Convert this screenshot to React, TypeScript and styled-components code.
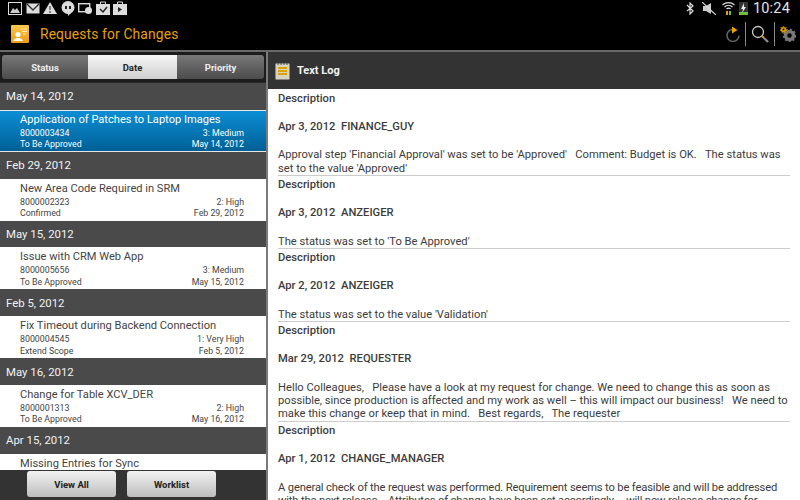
import React from "react";
import styled, { createGlobalStyle } from "styled-components";

const GlobalStyle = createGlobalStyle`
  html, body {
    margin: 0;
    padding: 0;
    background: #000;
  }
  body {
    font-family: "Roboto", "Liberation Sans", sans-serif;
  }
`;

type Request = {
  group: string;
  title: string;
  id: string;
  priority: string;
  status: string;
  date: string;
  selected?: boolean;
};

const requests: Request[] = [
  { group: "May 14, 2012", title: "Application of Patches to Laptop Images", id: "8000003434", priority: "3: Medium", status: "To Be Approved", date: "May 14, 2012", selected: true },
  { group: "Feb 29, 2012", title: "New Area Code Required in SRM", id: "8000002323", priority: "2: High", status: "Confirmed", date: "Feb 29, 2012" },
  { group: "May 15, 2012", title: "Issue with CRM Web App", id: "8000005656", priority: "3: Medium", status: "To Be Approved", date: "May 15, 2012" },
  { group: "Feb 5, 2012", title: "Fix Timeout during Backend Connection", id: "8000004545", priority: "1: Very High", status: "Extend Scope", date: "Feb 5, 2012" },
  { group: "May 16, 2012", title: "Change for Table XCV_DER", id: "8000001313", priority: "2: High", status: "To Be Approved", date: "May 16, 2012" },
  { group: "Apr 15, 2012", title: "Missing Entries for Sync", id: "", priority: "", status: "", date: "" },
];

const logs = [
  { head: "Apr 3, 2012  FINANCE_GUY", body: "Approval step 'Financial Approval' was set to be 'Approved'   Comment: Budget is OK.   The status was set to the value 'Approved'" },
  { head: "Apr 3, 2012  ANZEIGER", body: "The status was set to 'To Be Approved'" },
  { head: "Apr 2, 2012  ANZEIGER", body: "The status was set to the value 'Validation'" },
  { head: "Mar 29, 2012  REQUESTER", body: "Hello Colleagues,   Please have a look at my request for change. We need to change this as soon as possible, since production is affected and my work as well – this will impact our business!   We need to make this change or keep that in mind.   Best regards,   The requester" },
  { head: "Apr 1, 2012  CHANGE_MANAGER", body: "A general check of the request was performed. Requirement seems to be feasible and will be addressed with the next release.   Attributes of change have been set accordingly – will now release change for", tight: true },
];

const Screen = styled.div`
  width: 800px;
  height: 500px;
  overflow: hidden;
  display: flex;
  flex-direction: column;
  background: #000;
`;

const StatusBar = styled.div`
  height: 16px;
  flex: none;
  background: #000;
  display: flex;
  align-items: center;
  justify-content: space-between;
  padding: 0 10px 0 8px;
`;

const StatusIcons = styled.div`
  display: flex;
  align-items: center;
  gap: 3.5px;
`;

const Clock = styled.span`
  color: #e4e4e4;
  font-size: 14.5px;
  line-height: 16px;
  margin: 1px 0 0 1px;
  letter-spacing: 0.2px;
`;

const ActionBar = styled.div`
  height: 36px;
  flex: none;
  box-sizing: border-box;
  display: flex;
  align-items: center;
  padding: 2px 4px 0 11px;
  border-bottom: 2px solid #6a6a6a;
`;

const AppTitle = styled.h1`
  margin: 0 0 0 11px;
  flex: 1;
  color: #e8a200;
  font-size: 13.8px;
  font-weight: 400;
  letter-spacing: 0.15px;
`;

const ActionDivider = styled.div`
  width: 1px;
  height: 24px;
  background: #888;
  margin: 0 5px;
`;

const Body = styled.div`
  flex: 1;
  min-height: 0;
  display: flex;
`;

const LeftPane = styled.div`
  width: 266px;
  flex: none;
  position: relative;
  background: #4a4a4a;
  border-right: 2px solid #7a7a7a;
  overflow: hidden;
`;

const SegmentWrap = styled.div`
  height: 31px;
  padding: 3px 2px 2px;
  box-sizing: border-box;
  background: #1c1c1c;
  border-bottom: 1px solid #2a2a2a;
`;

const Segments = styled.div`
  height: 24px;
  display: grid;
  grid-template-columns: 86px 89px 1fr;
  border-radius: 3px;
  overflow: hidden;
`;

const Segment = styled.div<{ $active?: boolean }>`
  display: flex;
  align-items: center;
  justify-content: center;
  font-size: 9.5px;
  font-weight: 700;
  color: ${(p) => (p.$active ? "#222" : "#eee")};
  background: ${(p) =>
    p.$active
      ? "linear-gradient(#f6f6f6, #cfcfcf)"
      : "linear-gradient(#787878, #4c4c4c)"};
`;

const GroupHeader = styled.div`
  height: 26.8px;
  display: flex;
  align-items: center;
  padding-left: 6px;
  box-sizing: border-box;
  background: #4a4a4a;
  color: #f2f2f2;
  font-size: 11.4px;
`;

const Row = styled.div<{ $selected?: boolean }>`
  height: 42px;
  box-sizing: content-box;
  padding: 0 22px 0 20px;
  display: flex;
  flex-direction: column;
  color: ${(p) => (p.$selected ? "#fff" : "#444")};
  background: ${(p) =>
    p.$selected ? "linear-gradient(#0c8fd6, #005f94)" : "#fff"};
  box-shadow: ${(p) =>
    p.$selected ? "inset 0 1px #e6e6e6, inset 0 -1px #e6e6e6" : "none"};
`;

const RowTitle = styled.div`
  font-size: 11.1px;
  padding-top: 1px;
  line-height: 17px;
  white-space: nowrap;
`;

const RowLine = styled.div`
  display: flex;
  justify-content: space-between;
  font-size: 8.8px;
  line-height: 11.5px;
`;

const BottomBar = styled.div`
  position: absolute;
  left: 0;
  right: 0;
  bottom: 0;
  height: 30px;
  background: #333;
  display: flex;
  justify-content: center;
  gap: 11px;
  padding-right: 23px;
`;

const BarButton = styled.div`
  width: 89px;
  height: 26px;
  margin-top: 1px;
  border-radius: 3px;
  background: linear-gradient(#f2f2f2, #bdbdbd);
  color: #222;
  font-size: 9.5px;
  font-weight: 700;
  display: flex;
  align-items: center;
  justify-content: center;
`;

const RightPane = styled.div`
  flex: 1;
  min-width: 0;
  display: flex;
  flex-direction: column;
  background: #fff;
`;

const PaneHeader = styled.div`
  height: 37px;
  flex: none;
  background: #333;
  display: flex;
  align-items: center;
  gap: 7px;
  padding-left: 7px;
  color: #f2f2f2;
  font-size: 11px;
  font-weight: 700;
`;

const LogList = styled.div`
  flex: 1;
  min-height: 0;
  overflow: hidden;
  padding: 0.5px 10px 0;
`;

const LogEntry = styled.div`
  color: #3c3c3c;
  font-size: 11.2px;
  border-bottom: 1px solid #ccc;
`;

const LogLabel = styled.div`
  font-weight: 500;
  line-height: 18px;
`;

const LogHead = styled.div`
  font-weight: 500;
  line-height: 18px;
  margin-top: 10px;
  margin-bottom: 12.8px;
  white-space: pre;
`;

const LogBody = styled.div<{ $tight?: boolean }>`
  line-height: 13.3px;
  white-space: pre-wrap;
  letter-spacing: ${(p) => (p.$tight ? "-0.15px" : "0")};
`;

const NoteIcon = () => (
  <svg width="15" height="18" viewBox="0 0 15 18">
    <rect x="0.5" y="1.5" width="14" height="16" rx="1" fill="#d8d4c0" stroke="#888" />
    <path d="M3 1v2M6 1v2M9 1v2M12 1v2" stroke="#555" />
    <path d="M3 6h9M3 9h9M3 12h9" stroke="#e0a000" strokeWidth="2" />
  </svg>
);

const AppIcon = () => (
  <svg width="18" height="18" viewBox="0 0 18 18">
    <defs>
      <linearGradient id="appIconFill" x1="0" y1="0" x2="0" y2="1">
        <stop offset="0" stopColor="#f9c94b" />
        <stop offset="1" stopColor="#ef9a10" />
      </linearGradient>
    </defs>
    <rect width="18" height="18" rx="1" fill="url(#appIconFill)" />
    <circle cx="7" cy="9.5" r="2.6" fill="#fff" />
    <path d="M2 16c1-4 9-4 10 0z" fill="#fff" />
    <path d="M10 4h6M11 6.5h5M12 9h3" stroke="#ffe9b8" />
  </svg>
);

const StatusGlyphs = () => (
  <StatusIcons>
    <svg width="14" height="13" viewBox="0 0 14 13">
      <rect x="0.5" y="0.5" width="13" height="12" fill="none" stroke="#ddd" />
      <path d="M2 11l3-5 2 2 2-2 3 5z" fill="#ccc" />
    </svg>
    <svg width="14" height="11" viewBox="0 0 14 11">
      <rect x="0.5" y="0.5" width="13" height="10" fill="#ddd" />
      <path d="M1 1l6 6 6-6" fill="none" stroke="#333" strokeWidth="1.4" />
    </svg>
    <svg width="14" height="12" viewBox="0 0 14 12">
      <path d="M7 0l7 12H0z" fill="#ddd" />
      <path d="M7 4v4M7 9v2" stroke="#222" />
    </svg>
    <svg width="14" height="15" viewBox="0 0 14 15">
      <circle cx="7" cy="6.5" r="6.5" fill="#ddd" />
      <path d="M7 12v3l3-3z" fill="#ddd" />
      <path d="M4 5h2v3H4zM8 5h2v3H8z" fill="#222" />
    </svg>
    <svg width="14" height="12" viewBox="0 0 14 12">
      <rect x="0.7" y="1.7" width="11" height="8" fill="none" stroke="#ddd" strokeWidth="1.4" />
      <circle cx="10.5" cy="8.5" r="3.5" fill="#ddd" />
    </svg>
    <svg width="14" height="14" viewBox="0 0 14 14">
      <rect y="3" width="14" height="11" fill="#ddd" />
      <path d="M4.5 4V1h5v3" fill="none" stroke="#ddd" />
      <path d="M4 8l3 3 4-5" fill="none" stroke="#222" strokeWidth="1.5" />
    </svg>
    <svg width="14" height="14" viewBox="0 0 14 14">
      <rect y="3" width="14" height="11" fill="#ddd" />
      <path d="M4.5 4V1h5v3" fill="none" stroke="#ddd" />
      <path d="M5 6l4 2.5L5 11z" fill="#222" />
    </svg>
  </StatusIcons>
);

const SystemGlyphs = () => (
  <StatusIcons>
    <svg width="9" height="13" viewBox="0 0 9 13">
      <path d="M1 3l6 6-3 3V1l3 3-6 5" fill="none" stroke="#ddd" strokeWidth="1.2" />
    </svg>
    <svg width="14" height="13" viewBox="0 0 14 13" style={{ marginLeft: 4 }}>
      <path d="M1 4h3l5-3v11L4 9H1z" fill="#ccc" />
      <path d="M0 0l14 13" stroke="#ddd" strokeWidth="1.2" />
    </svg>
    <svg width="13" height="14" viewBox="0 0 13 14" style={{ marginLeft: 2 }}>
      <path d="M0.5 4a9 9 0 0 1 12 0M2.5 6a6 6 0 0 1 8 0M4.5 8a3 3 0 0 1 4 0" fill="none" stroke="#ddd" strokeWidth="1.2" />
      <path d="M4 10h2v4H4z" fill="#e0a000" />
      <path d="M7 10h2v4H7z" fill="#6fbf3a" />
    </svg>
    <svg width="9" height="14" viewBox="0 0 9 14" style={{ marginLeft: 1 }}>
      <rect y="1" width="9" height="13" fill="#333" />
      <rect y="11" width="9" height="3" fill="#6fbf3a" />
      <path d="M5 2L2 8h2l-1 4 4-6H5z" fill="#eee" />
    </svg>
  </StatusIcons>
);

const RefreshIcon = () => (
  <svg width="14" height="16" viewBox="0 0 14 16">
    <path d="M6 3.5a6 6 0 1 0 7 6" fill="none" stroke="#666" strokeWidth="1.5" />
    <path d="M6 0.5l5.5 3.5L6 7.5z" fill="#e8a200" />
  </svg>
);

const SearchIcon = () => (
  <svg width="18" height="18" viewBox="0 0 18 18">
    <circle cx="7" cy="7" r="5.5" fill="none" stroke="#ccc" strokeWidth="1.3" />
    <path d="M11 11l2 2" stroke="#e8a200" strokeWidth="2" />
    <path d="M13 13l4 4" stroke="#888" strokeWidth="2.4" />
  </svg>
);

const GearIcon = () => (
  <svg width="16" height="16" viewBox="0 0 16 16">
    <circle cx="9.5" cy="9.5" r="4" fill="none" stroke="#777" strokeWidth="3.4" />
    <circle cx="9.5" cy="9.5" r="6" fill="none" stroke="#777" strokeWidth="1.6" strokeDasharray="2 2" />
    <circle cx="3.5" cy="3.5" r="1.8" fill="none" stroke="#e8a200" strokeWidth="1.6" />
    <circle cx="3.5" cy="3.5" r="3.2" fill="none" stroke="#e8a200" strokeWidth="1" strokeDasharray="1.4 1.4" />
  </svg>
);

export default function App() {
  return (
    <Screen>
      <GlobalStyle />
      <StatusBar>
        <StatusGlyphs />
        <StatusIcons>
          <SystemGlyphs />
          <Clock>10:24</Clock>
        </StatusIcons>
      </StatusBar>
      <ActionBar>
        <AppIcon />
        <AppTitle>Requests for Changes</AppTitle>
        <RefreshIcon />
        <ActionDivider />
        <SearchIcon />
        <ActionDivider />
        <GearIcon />
      </ActionBar>
      <Body>
        <LeftPane>
          <SegmentWrap>
            <Segments>
              <Segment>Status</Segment>
              <Segment $active>Date</Segment>
              <Segment>Priority</Segment>
            </Segments>
          </SegmentWrap>
          {requests.map((r) => (
            <div key={r.group}>
              <GroupHeader>{r.group}</GroupHeader>
              <Row $selected={r.selected}>
                <RowTitle>{r.title}</RowTitle>
                <RowLine>
                  <span>{r.id}</span>
                  <span>{r.priority}</span>
                </RowLine>
                <RowLine>
                  <span>{r.status}</span>
                  <span>{r.date}</span>
                </RowLine>
              </Row>
            </div>
          ))}
          <BottomBar>
            <BarButton>View All</BarButton>
            <BarButton>Worklist</BarButton>
          </BottomBar>
        </LeftPane>
        <RightPane>
          <PaneHeader>
            <NoteIcon />
            Text Log
          </PaneHeader>
          <LogList>
            {logs.map((l) => (
              <LogEntry key={l.head}>
                <LogLabel>Description</LogLabel>
                <LogHead>{l.head}</LogHead>
                <LogBody $tight={l.tight}>{l.body}</LogBody>
              </LogEntry>
            ))}
          </LogList>
        </RightPane>
      </Body>
    </Screen>
  );
}
